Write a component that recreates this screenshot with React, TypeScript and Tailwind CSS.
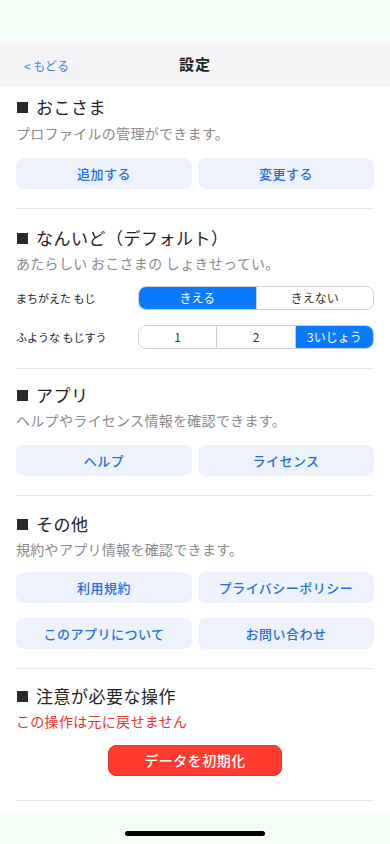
import React, { useState } from 'react';

// Settings screen (設定) - children profiles, difficulty defaults, app info, danger zone

const FONT = { fontFamily: '"Noto Sans CJK JP", "Noto Sans", sans-serif' };

function SectionTitle({ children }: { children: React.ReactNode }) {
  return (
    <h2 className="flex items-center h-[24px] text-[17px] text-[#222] leading-[24px] tracking-[0.5px]">
      <span className="inline-block w-[11px] h-[11px] bg-[#2a2a2a] mr-[8px] ml-[1px]" />
      {children}
    </h2>
  );
}

function SoftButton({ label }: { label: string }) {
  return (
    <button className="h-[31px] rounded-[8px] bg-[#eef2fc] text-[13px] font-medium text-[#1f6fe0] tracking-[0.5px]">
      {label}
    </button>
  );
}

interface SegmentedProps {
  options: string[];
  value: number;
  onChange: (i: number) => void;
}

function Segmented({ options, value, onChange }: SegmentedProps) {
  return (
    <div className="flex w-[236px] h-[24px] rounded-[8px] border border-[#cfcfcf] overflow-hidden">
      {options.map((opt, i) => (
        <button
          key={opt}
          onClick={() => onChange(i)}
          className={`flex-1 text-[12px] ${i > 0 ? 'border-l border-[#cfcfcf]' : ''} ${
            i === value ? 'bg-[#0a7aff] text-white border-[#0a7aff]' : 'bg-white text-[#333]'
          }`}
        >
          {opt}
        </button>
      ))}
    </div>
  );
}

export default function App() {
  const [erase, setErase] = useState(0);
  const [count, setCount] = useState(2);

  return (
    <div className="min-h-[844px] flex flex-col bg-[#f4fdf6]" style={FONT}>
      {/* status bar space */}
      <div className="h-[41px]" />

      {/* Header */}
      <header className="h-[46px] bg-[#f4f4f6] flex items-center px-[24px]">
        <div className="flex-1">
          <button className="text-[12px] text-[#3a7ee6]">&lt; もどる</button>
        </div>
        <h1 className="text-[15px] font-bold text-[#222] tracking-[1px]">設定</h1>
        <div className="flex-1" />
      </header>

      <main className="bg-white flex-1 px-4">
        {/* おこさま */}
        <section className="pt-[8px] pb-[19px] border-b border-[#e6e6e6]">
          <SectionTitle>おこさま</SectionTitle>
          <p className="mt-[4px] h-[20px] text-[14px] leading-[20px] text-[#8a8a8a] tracking-[0.3px]">
            プロファイルの管理ができます。
          </p>
          <div className="mt-[15px] grid grid-cols-2 gap-[6px]">
            <SoftButton label="追加する" />
            <SoftButton label="変更する" />
          </div>
        </section>

        {/* なんいど */}
        <section className="pt-[17px] pb-[19px] border-b border-[#e6e6e6]">
          <SectionTitle>なんいど（デフォルト）</SectionTitle>
          <p className="mt-[3px] h-[20px] text-[14px] leading-[20px] text-[#8a8a8a] tracking-[0.3px]">
            あたらしい おこさまの しょきせってい。
          </p>
          <div className="mt-[13px] flex items-center justify-between">
            <span className="text-[11px] text-[#222]">まちがえた もじ</span>
            <Segmented options={['きえる', 'きえない']} value={erase} onChange={setErase} />
          </div>
          <div className="mt-[15px] flex items-center justify-between">
            <span className="text-[11px] text-[#222]">ふような もじすう</span>
            <Segmented options={['1', '2', '3いじょう']} value={count} onChange={setCount} />
          </div>
        </section>

        {/* アプリ */}
        <section className="pt-[14px] pb-[19px] border-b border-[#e6e6e6]">
          <SectionTitle>アプリ</SectionTitle>
          <p className="mt-[3px] h-[20px] text-[14px] leading-[20px] text-[#8a8a8a] tracking-[0.3px]">
            ヘルプやライセンス情報を確認できます。
          </p>
          <div className="mt-[15px] grid grid-cols-2 gap-[6px]">
            <SoftButton label="ヘルプ" />
            <SoftButton label="ライセンス" />
          </div>
        </section>

        {/* その他 */}
        <section className="pt-[16px] pb-[19px] border-b border-[#e6e6e6]">
          <SectionTitle>その他</SectionTitle>
          <p className="mt-[3px] h-[20px] text-[14px] leading-[20px] text-[#8a8a8a] tracking-[0.3px]">
            規約やアプリ情報を確認できます。
          </p>
          <div className="mt-[13px] grid grid-cols-2 gap-x-[6px] gap-y-[15px]">
            <SoftButton label="利用規約" />
            <SoftButton label="プライバシーポリシー" />
            <SoftButton label="このアプリについて" />
            <SoftButton label="お問い合わせ" />
          </div>
        </section>

        {/* 注意が必要な操作 */}
        <section className="pt-[15px] pb-[24px] border-b border-[#e6e6e6]">
          <SectionTitle>注意が必要な操作</SectionTitle>
          <p className="mt-[3px] h-[20px] text-[14px] leading-[20px] text-[#e8342c] tracking-[0.3px]">
            この操作は元に戻せません
          </p>
          <div className="mt-[14px] flex justify-center">
            <button className="w-[174px] h-[31px] rounded-[8px] bg-[#ff3b30] border border-[#d63a30] text-[14px] font-medium text-white tracking-[0.5px]">
              データを初期化
            </button>
          </div>
        </section>
        <div className="h-[11px]" />
      </main>

      {/* home indicator */}
      <div className="h-[32px] flex justify-center pt-[19px] bg-[#f4fdf6]">
        <div className="w-[140px] h-[5px] rounded-full bg-black" />
      </div>
    </div>
  );
}
